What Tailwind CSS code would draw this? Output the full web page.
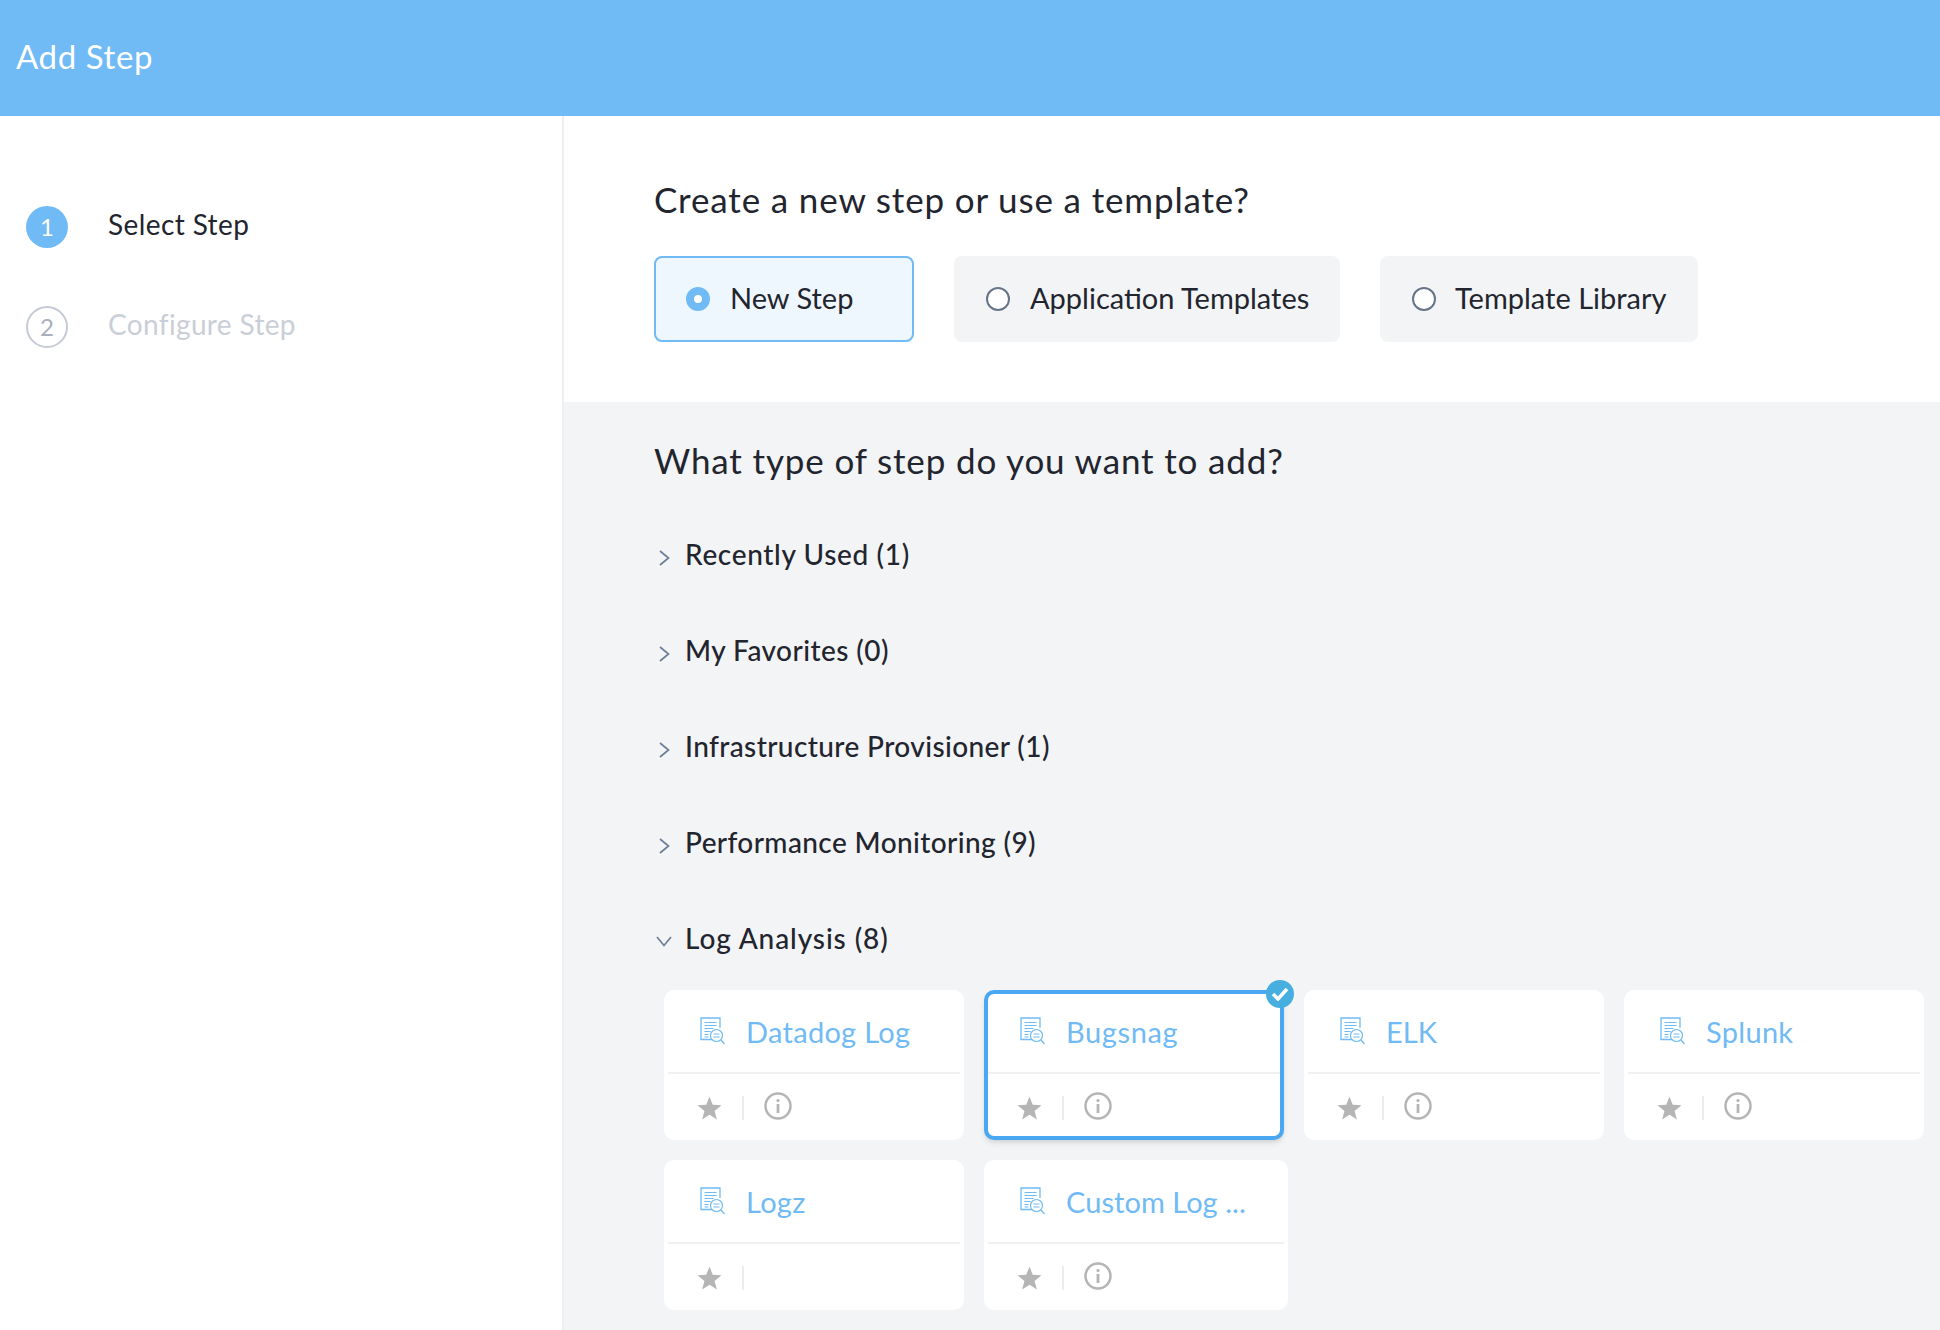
<!DOCTYPE html>
<html lang="en">
<head>
    <meta charset="UTF-8">
    <title>Add Step</title>
    <script src="https://cdn.jsdelivr.net/npm/@tailwindcss/browser@4"></script>
</head>
<body class="bg-white font-['Lato',sans-serif] text-[#22252e]">
    <svg class="hidden">
        <symbol id="doc" viewBox="0 0 25 28">
            <path d="M12 22.5H1V1h19v10" fill="none" stroke="currentColor" stroke-width="1.3"/>
            <path d="M4.500 5.500h12M4.500 8.500h12M4.500 11.500h9M4.500 14.500h6M4.500 17.500h4M4.500 20h4" fill="none" stroke="currentColor" stroke-width="1.200"/>
            <circle cx="16.500" cy="18.500" r="6" fill="#fff" stroke="currentColor" stroke-width="1.200"/>
            <path d="M13.500 17h6M13.500 20h6M21 23l3.500 4" fill="none" stroke="currentColor" stroke-width="1.200"/>
        </symbol>
        <symbol id="star" viewBox="0 0 25 24">
            <path d="M12.500 0.500l3.200 8.300 8.800 0.500-6.900 5.600 2.300 8.600-7.400-4.800-7.400 4.800 2.300-8.600L0.500 9.300l8.800-0.500z" fill="#b5b5b5"/>
        </symbol>
        <symbol id="info" viewBox="0 0 28 28">
            <circle cx="14" cy="14" r="12.500" fill="none" stroke="#b5b5b5" stroke-width="2.500"/>
            <circle cx="14" cy="8.500" r="1.600" fill="#b5b5b5"/>
            <path d="M14 12v9" stroke="#b5b5b5" stroke-width="2.800"/>
        </symbol>
        <symbol id="chev-right" viewBox="0 0 11 16">
            <path d="M1 1l8.500 7L1 15" fill="none" stroke="#6b7f99" stroke-width="1.700"/>
        </symbol>
        <symbol id="chev-down" viewBox="0 0 16 11">
            <path d="M1 1l7 8.500L15 1" fill="none" stroke="#6b7f99" stroke-width="1.700"/>
        </symbol>
    </svg>

    <div class="flex flex-col h-[1330px] w-[1940px] overflow-hidden">
        <header class="h-[116px] shrink-0 bg-[#70baf5] flex items-center pl-4">
            <h1 class="text-[33px] tracking-[0.6px] text-white -mt-[2px]">Add Step</h1>
        </header>

        <div class="flex flex-1">
            <aside class="w-[564px] shrink-0 border-r-2 border-[#eeeff2] pt-[90px] pl-[26px]">
                <div class="flex items-center gap-[40px] h-[42px]">
                    <span class="w-[42px] h-[42px] rounded-full bg-[#70baf5] text-white text-[24px] flex items-center justify-center">1</span>
                    <span class="text-[28px] tracking-[0.4px] -mt-[7px]">Select Step</span>
                </div>
                <div class="flex items-center gap-[40px] h-[42px] mt-[58px]">
                    <span class="w-[42px] h-[42px] rounded-full border-2 border-[#c5cad5] text-[#a9afbc] text-[24px] flex items-center justify-center">2</span>
                    <span class="text-[28px] tracking-[0.35px] -mt-[7px] text-[#c9ced8]">Configure Step</span>
                </div>
            </aside>

            <main class="flex-1 flex flex-col">
                <section class="h-[286px] shrink-0 pt-[63px] pl-[90px]">
                    <h2 class="text-[35px] tracking-[0.85px] leading-[40px]">Create a new step or use a template?</h2>
                    <div class="flex gap-[40px] mt-[37px]">
                        <label class="w-[260px] h-[86px] rounded-lg border-2 border-[#70baf5] bg-[#eff7fe] flex items-center pl-[30px] gap-[20px]">
                            <span class="w-[24px] h-[24px] rounded-full border-[8px] border-[#70baf5] bg-white"></span>
                            <span class="text-[29px] -mt-[2px]">New Step</span>
                        </label>
                        <label class="w-[386px] h-[86px] rounded-lg bg-[#f3f4f6] flex items-center pl-[32px] gap-[20px]">
                            <span class="w-[24px] h-[24px] rounded-full border-2 border-[#66748a] bg-white"></span>
                            <span class="text-[29px] -mt-[2px]">Application Templates</span>
                        </label>
                        <label class="w-[318px] h-[86px] rounded-lg bg-[#f3f4f6] flex items-center pl-[32px] gap-[19px]">
                            <span class="w-[24px] h-[24px] rounded-full border-2 border-[#66748a] bg-white"></span>
                            <span class="text-[29px] -mt-[2px]">Template Library</span>
                        </label>
                    </div>
                </section>

                <section class="flex-1 bg-[#f3f4f6] pt-[38px] pl-[90px]">
                    <h2 class="text-[35px] tracking-[0.85px] leading-[40px]">What type of step do you want to add?</h2>
                    <div class="mt-[26px]">
                        <div class="h-[96px] flex items-center">
                            <svg class="w-[11px] h-[16px] ml-[5px] mr-[15px] mt-[8px]"><use href="#chev-right"/></svg>
                            <span class="text-[28px] tracking-[0.65px] font-medium">Recently Used (1)</span>
                        </div>
                        <div class="h-[96px] flex items-center">
                            <svg class="w-[11px] h-[16px] ml-[5px] mr-[15px] mt-[8px]"><use href="#chev-right"/></svg>
                            <span class="text-[28px] tracking-[0.45px] font-medium">My Favorites (0)</span>
                        </div>
                        <div class="h-[96px] flex items-center">
                            <svg class="w-[11px] h-[16px] ml-[5px] mr-[15px] mt-[8px]"><use href="#chev-right"/></svg>
                            <span class="text-[28px] tracking-[0.4px] font-medium">Infrastructure Provisioner (1)</span>
                        </div>
                        <div class="h-[96px] flex items-center">
                            <svg class="w-[11px] h-[16px] ml-[5px] mr-[15px] mt-[8px]"><use href="#chev-right"/></svg>
                            <span class="text-[28px] tracking-[0.4px] font-medium">Performance Monitoring (9)</span>
                        </div>
                        <div class="h-[96px] flex items-center">
                            <svg class="w-[16px] h-[11px] ml-[2px] mr-[13px] mt-[6px]"><use href="#chev-down"/></svg>
                            <span class="text-[28px] tracking-[0.9px] font-medium">Log Analysis (8)</span>
                        </div>
                    </div>

                    <div class="flex flex-wrap gap-5 mt-[4px] ml-[10px]">
                        <div class="w-[300px] h-[150px] rounded-[10px] bg-white px-1">
                            <div class="h-[84px] border-b-2 border-[#f0f0f2] flex items-center pl-8 gap-[21px] text-[#70baf5]">
                                <svg class="w-[25px] h-[28px]"><use href="#doc"/></svg>
                                <span class="text-[29px] tracking-[0.3px] mt-[2px]">Datadog Log</span>
                            </div>
                            <div class="flex items-center pl-[29px] pt-[18px]">
                                <svg class="w-[25px] h-[24px] mt-1"><use href="#star"/></svg>
                                <span class="w-[2px] h-[24px] bg-[#ececee] ml-[20px] mr-[20px] mt-1"></span>
                                <svg class="w-[28px] h-[28px]"><use href="#info"/></svg>
                            </div>
                        </div>
                        <div class="relative w-[300px] h-[150px] rounded-[10px] bg-white border-4 border-[#4aa8f2] shadow-md">
                            <span class="absolute -top-[14px] -right-[14px] w-[28px] h-[28px] rounded-full bg-[#47aee0] flex items-center justify-center">
                                <svg class="w-[18px] h-[14px]" viewBox="0 0 18 14"><path d="M2 7l5 5 9-10" fill="none" stroke="#fff" stroke-width="3.500"/></svg>
                            </span>
                            <div class="h-[80px] border-b-2 border-[#f0f0f2] flex items-center pl-8 gap-[21px] text-[#70baf5]">
                                <svg class="w-[25px] h-[28px] -mt-1"><use href="#doc"/></svg>
                                <span class="text-[29px] tracking-[0.6px] -mt-[2px]">Bugsnag</span>
                            </div>
                            <div class="flex items-center pl-[29px] pt-[18px]">
                                <svg class="w-[25px] h-[24px] mt-1"><use href="#star"/></svg>
                                <span class="w-[2px] h-[24px] bg-[#ececee] ml-[20px] mr-[20px] mt-1"></span>
                                <svg class="w-[28px] h-[28px]"><use href="#info"/></svg>
                            </div>
                        </div>
                        <div class="w-[300px] h-[150px] rounded-[10px] bg-white px-1">
                            <div class="h-[84px] border-b-2 border-[#f0f0f2] flex items-center pl-8 gap-[21px] text-[#70baf5]">
                                <svg class="w-[25px] h-[28px]"><use href="#doc"/></svg>
                                <span class="text-[29px] mt-[2px]">ELK</span>
                            </div>
                            <div class="flex items-center pl-[29px] pt-[18px]">
                                <svg class="w-[25px] h-[24px] mt-1"><use href="#star"/></svg>
                                <span class="w-[2px] h-[24px] bg-[#ececee] ml-[20px] mr-[20px] mt-1"></span>
                                <svg class="w-[28px] h-[28px]"><use href="#info"/></svg>
                            </div>
                        </div>
                        <div class="w-[300px] h-[150px] rounded-[10px] bg-white px-1">
                            <div class="h-[84px] border-b-2 border-[#f0f0f2] flex items-center pl-8 gap-[21px] text-[#70baf5]">
                                <svg class="w-[25px] h-[28px]"><use href="#doc"/></svg>
                                <span class="text-[29px] tracking-[0.3px] mt-[2px]">Splunk</span>
                            </div>
                            <div class="flex items-center pl-[29px] pt-[18px]">
                                <svg class="w-[25px] h-[24px] mt-1"><use href="#star"/></svg>
                                <span class="w-[2px] h-[24px] bg-[#ececee] ml-[20px] mr-[20px] mt-1"></span>
                                <svg class="w-[28px] h-[28px]"><use href="#info"/></svg>
                            </div>
                        </div>
                        <div class="w-[300px] h-[150px] rounded-[10px] bg-white px-1">
                            <div class="h-[84px] border-b-2 border-[#f0f0f2] flex items-center pl-8 gap-[21px] text-[#70baf5]">
                                <svg class="w-[25px] h-[28px]"><use href="#doc"/></svg>
                                <span class="text-[29px] tracking-[0.3px] mt-[2px]">Logz</span>
                            </div>
                            <div class="flex items-center pl-[29px] pt-[18px]">
                                <svg class="w-[25px] h-[24px] mt-1"><use href="#star"/></svg>
                                <span class="w-[2px] h-[24px] bg-[#ececee] ml-[20px] mr-[20px] mt-1"></span>
                            </div>
                        </div>
                        <div class="w-[304px] h-[150px] rounded-[10px] bg-white px-1">
                            <div class="h-[84px] border-b-2 border-[#f0f0f2] flex items-center pl-8 gap-[21px] text-[#70baf5]">
                                <svg class="w-[25px] h-[28px]"><use href="#doc"/></svg>
                                <span class="text-[29px] tracking-[0.05px] mt-[2px]">Custom Log ...</span>
                            </div>
                            <div class="flex items-center pl-[29px] pt-[18px]">
                                <svg class="w-[25px] h-[24px] mt-1"><use href="#star"/></svg>
                                <span class="w-[2px] h-[24px] bg-[#ececee] ml-[20px] mr-[20px] mt-1"></span>
                                <svg class="w-[28px] h-[28px]"><use href="#info"/></svg>
                            </div>
                        </div>
                    </div>
                </section>
            </main>
        </div>
    </div>
</body>
</html>
